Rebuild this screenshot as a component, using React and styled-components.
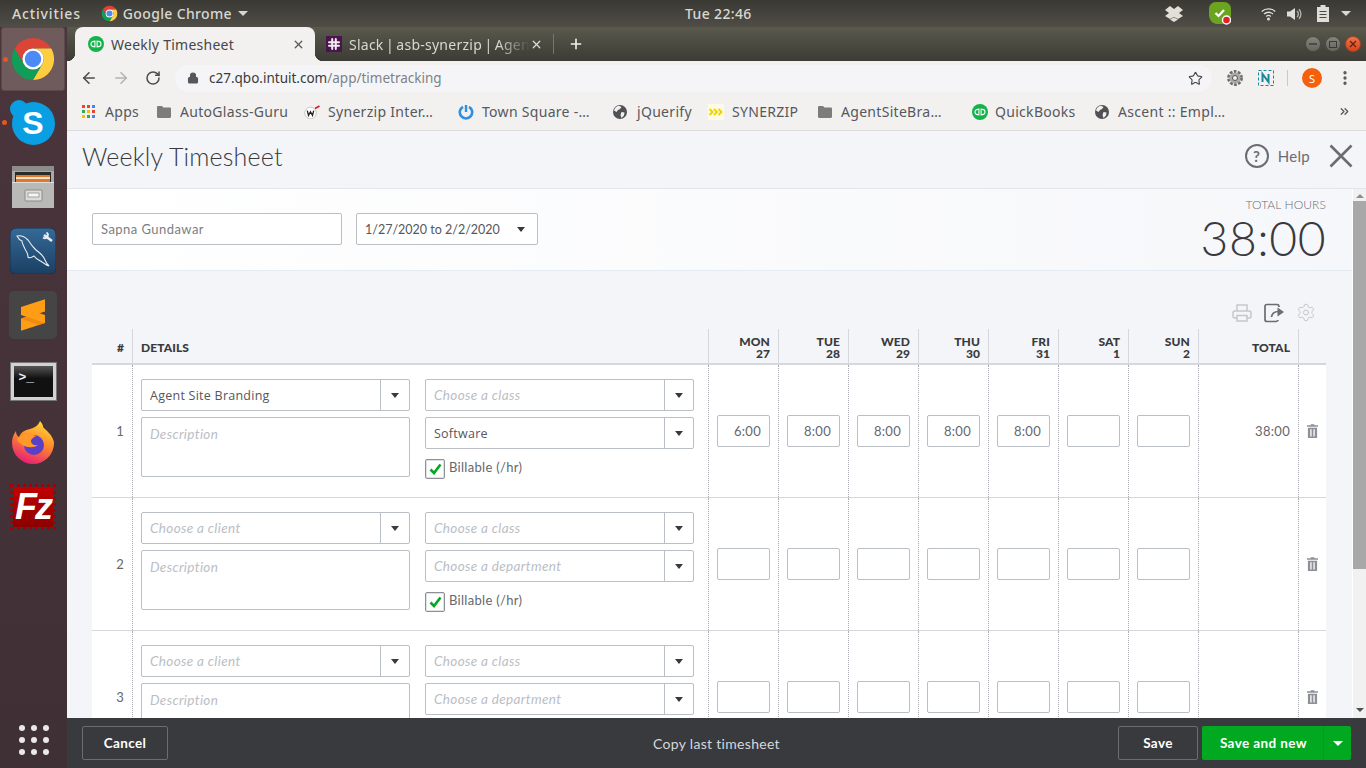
import React from "react";
import styled, { createGlobalStyle } from "styled-components";
import { Settings, Star, ArrowLeft, ArrowRight, RotateCw, Lock, Plus, X, MoreVertical, ChevronsRight } from "lucide-react";

const GlobalStyle = createGlobalStyle`
  html, body { margin: 0; padding: 0; overflow: hidden; }
  * { box-sizing: border-box; }
`;

const UI_FONT = `"Noto Sans", "Open Sans", sans-serif`;
const QBO_FONT = `"Lato", "Open Sans", sans-serif`;

const Screen = styled.div`
  width: 1366px;
  height: 768px;
  display: flex;
  flex-direction: column;
  overflow: hidden;
  font-family: ${UI_FONT};
`;

/* gnome top bar */
const TopBar = styled.div`
  height: 27px;
  flex: none;
  display: flex;
  align-items: center;
  background: linear-gradient(#3a3934, #4f4d46);
  color: #d9d8d0;
  font-size: 14px;
  font-weight: 500;
  letter-spacing: 0.35px;
`;

const TopLeft = styled.div`
  width: 685px;
  display: flex;
  align-items: center;
  padding-left: 12px;
`;

const AppName = styled.span`
  margin-left: 5px;
`;

const Activities = styled.span`
  margin-right: 20px;
  letter-spacing: 0.85px;
`;

const Caret = styled.span`
  display: inline-block;
  flex: none;
  margin-left: ${({ $ml }) => $ml || 0}px;
  border-left: ${({ $w }) => $w || 5}px solid transparent;
  border-right: ${({ $w }) => $w || 5}px solid transparent;
  border-top: ${({ $h }) => $h || 5}px solid ${({ $color }) => $color || "#d9d8d0"};
`;

const Clock = styled.span`
  width: 66px;
  white-space: nowrap;
`;

const Tray = styled.div`
  flex: 1;
  display: flex;
  justify-content: flex-end;
  align-items: center;
  padding-right: 15px;
`;

const TrayItem = styled.span`
  display: flex;
  margin-left: ${({ $ml }) => $ml || 0}px;
`;

const Main = styled.div`
  flex: 1;
  min-height: 0;
  display: flex;
`;

/* launcher */
const Dock = styled.div`
  width: 67px;
  flex: none;
  display: flex;
  flex-direction: column;
  background: linear-gradient(#4a353b, #3f3036);
  padding-bottom: 3px;
`;

const DockTile = styled.div`
  position: relative;
  height: 64px;
  flex: none;
  display: flex;
  align-items: center;
  justify-content: center;
  padding-top: ${({ $pt }) => $pt || 0}px;
  margin: 0 2px 0 1px;
  border-radius: 3px;
  background: ${({ $active }) => ($active ? "#6f5a5c" : "transparent")};
  border: ${({ $active }) => ($active ? "1px solid #5d494c" : "none")};
`;

const RunDot = styled.span`
  position: absolute;
  left: 1px;
  top: 29px;
  width: 5px;
  height: 5px;
  border-radius: 50%;
  background: #e95420;
`;

const DockGrid = styled.div`
  margin-top: auto;
  align-self: center;
  display: grid;
  grid-template-columns: repeat(3, 6px);
  gap: 6px;
  margin-bottom: 10px;
`;

const GridDot = styled.span`
  width: 6px;
  height: 6px;
  border-radius: 50%;
  background: #ebe8e8;
`;

const SkypeBadge = styled.div`
  position: relative;
  width: 43px;
  height: 43px;
  border-radius: 50%;
  background: #0a9fe3;
  color: #fff;
  font: 700 32px "Liberation Sans", sans-serif;
  display: flex;
  align-items: center;
  justify-content: center;

  &::before {
    content: "";
    position: absolute;
    left: -2px;
    top: -2px;
    width: 18px;
    height: 18px;
    border-radius: 50%;
    background: #0a9fe3;
  }
`;

const SkypeLetter = styled.span`
  position: relative;
`;

const FzBadge = styled.div`
  width: 46px;
  height: 46px;
  background: linear-gradient(#c20000, #8c0000);
  border: 3px dotted #a80000;
  background-clip: padding-box;
  color: #fff;
  font: italic 700 36px "Liberation Sans", sans-serif;
  letter-spacing: -2px;
  display: flex;
  align-items: center;
  justify-content: center;
`;

const TermBadge = styled.div`
  width: 45px;
  height: 37px;
  background: linear-gradient(#555, #111 40%);
  border: 3px solid #d2d2d2;
  outline: 1px solid #777;
  color: #eee;
  font: 700 13px "Liberation Mono", monospace;
  padding: 4px 0 0 5px;
`;

/* chrome window */
const Browser = styled.div`
  flex: 1;
  min-width: 0;
  display: flex;
  flex-direction: column;
`;

const TabStrip = styled.div`
  height: 34px;
  flex: none;
  display: flex;
  align-items: stretch;
  padding-left: 8px;
  background: linear-gradient(#5a594c, #3c3b35);
`;

const Tab = styled.div`
  position: relative;
  width: ${({ $active }) => ($active ? 240 : 238)}px;
  display: flex;
  align-items: center;
  padding: 0 10px 0 ${({ $active }) => ($active ? 13 : 11)}px;
  border-radius: 8px 8px 0 0;
  font-size: 14px;
  color: ${({ $active }) => ($active ? "#45474a" : "#d8d8d3")};
  background: ${({ $active }) => ($active ? "#f2f1f0" : "transparent")};

  ${({ $active }) =>
    $active &&
    `
    &::before, &::after {
      content: "";
      position: absolute;
      bottom: 0;
      width: 8px;
      height: 8px;
    }
    &::before { left: -8px; background: radial-gradient(circle at 0 0, transparent 8px, #f2f1f0 8.5px); }
    &::after { right: -8px; background: radial-gradient(circle at 100% 0, transparent 8px, #f2f1f0 8.5px); }
  `}
`;

const TabTitle = styled.span`
  flex: 1;
  min-width: 0;
  margin-left: 7px;
  white-space: nowrap;
  overflow: hidden;
  letter-spacing: 0.25px;
  ${({ $fade }) => $fade && `word-spacing: -1.5px; mask-image: linear-gradient(90deg, #000 82%, transparent 100%);`}
`;

const TabSep = styled.span`
  width: 1px;
  height: 20px;
  align-self: center;
  background: #77766c;
`;

const NewTab = styled.span`
  display: flex;
  align-self: center;
  margin-left: 14px;
  color: #f2f1f0;
`;

const WinButtons = styled.div`
  margin-left: auto;
  display: flex;
  align-items: center;
  gap: 4px;
  padding-right: 5px;
`;

const WinButton = styled.span`
  width: 16px;
  height: 16px;
  border-radius: 50%;
  display: flex;
  align-items: center;
  justify-content: center;
  background: ${({ $close }) => ($close ? "linear-gradient(#f0734a, #d9421a)" : "linear-gradient(#85847c, #66655e)")};
  border: 1px solid ${({ $close }) => ($close ? "#a8441f" : "#4a4944")};
`;

const Toolbar = styled.div`
  height: 34px;
  flex: none;
  display: flex;
  align-items: center;
  padding-left: 6px;
  background: #f2f1f0;
`;

const NavButton = styled.span`
  width: 32px;
  display: flex;
  justify-content: center;
  color: ${({ $off }) => ($off ? "#b3b3b3" : "#4a4c4f")};
`;

const Omnibox = styled.div`
  flex: 1;
  height: 27px;
  margin-left: 6px;
  display: flex;
  align-items: center;
  padding: 0 9px 0 12px;
  border-radius: 14px;
  background: #f5f5f7;
  font-size: 13.5px;
  color: #393b3e;
`;

const UrlHost = styled.span`
  margin-left: 10px;
`;

const UrlPath = styled.span`
  flex: 1;
  color: #7d8289;
`;

const Extensions = styled.div`
  width: 154px;
  flex: none;
  display: flex;
  align-items: center;
  padding-left: 14px;
`;

const ExtItem = styled.span`
  display: flex;
  margin-left: ${({ $ml }) => $ml || 0}px;
`;

const ExtSep = styled.span`
  width: 1px;
  height: 16px;
  margin: 0 13px;
  background: #c9c9c9;
`;

const Avatar = styled.span`
  width: 20px;
  height: 20px;
  margin-left: 1px;
  border-radius: 50%;
  display: flex;
  align-items: center;
  justify-content: center;
  background: #f4600c;
  color: #fff;
  font-size: 11px;
`;

const Bookmarks = styled.div`
  height: 36px;
  flex: none;
  display: flex;
  align-items: center;
  padding: 0 0 2px 15px;
  background: #f2f1f0;
  border-bottom: 1px solid #dcdcdf;
  font-size: 14px;
  color: #55585d;
  letter-spacing: 0.3px;
`;

const Bookmark = styled.div`
  width: ${({ $w }) => $w}px;
  flex: none;
  display: flex;
  align-items: center;
  white-space: nowrap;
`;

const BookmarkIcon = styled.span`
  width: ${({ $w }) => $w || 23}px;
  flex: none;
  display: flex;
`;

const MoreBookmarks = styled.span`
  margin-left: auto;
  display: flex;
  padding-right: 15px;
  color: #55585d;
`;

/* quickbooks page */
const Page = styled.div`
  flex: 1;
  min-height: 0;
  display: flex;
  flex-direction: column;
  font-family: ${QBO_FONT};
  color: #393a3d;
`;

const PageHeader = styled.div`
  height: 58px;
  flex: none;
  display: flex;
  align-items: center;
  padding: 0 13px 7px 15px;
  background: #f4f5f8;
  border-bottom: 1px solid #e3e5e8;
`;

const PageTitle = styled.h1`
  margin: 0;
  font-size: 25px;
  font-weight: 300;
  letter-spacing: 0.18px;
`;

const HelpGroup = styled.div`
  margin-left: auto;
  display: flex;
  align-items: center;
  color: #6b6c72;
  font-size: 15px;
  letter-spacing: 0.3px;
`;

const HelpCircle = styled.span`
  width: 24px;
  height: 24px;
  margin-right: 9px;
  border: 2px solid #6b6c72;
  border-radius: 50%;
  display: flex;
  align-items: center;
  justify-content: center;
  font-size: 15px;
  font-weight: 700;
`;

const CloseIcon = styled.span`
  display: flex;
  margin-left: 19px;
`;

const PageBody = styled.div`
  flex: 1;
  min-height: 0;
  display: flex;
`;

const Scroller = styled.div`
  flex: 1;
  min-width: 0;
  overflow: hidden;
  background: #f4f5f8;
`;

const Scrollbar = styled.div`
  width: 13px;
  flex: none;
  margin-left: 1px;
  display: flex;
  flex-direction: column;
  align-items: center;
  background: #f1f1f1;
`;

const ScrollThumb = styled.div`
  width: 13px;
  height: 368px;
  margin-top: 3px;
  background: #a8a8a8;
`;

const ScrollArrowUp = styled.span`
  margin-top: 5px;
  border-left: 4px solid transparent;
  border-right: 4px solid transparent;
  border-bottom: 4px solid #8e8e8e;
`;

const ScrollArrowDown = styled.span`
  margin-top: auto;
  margin-bottom: 6px;
  border-left: 4px solid transparent;
  border-right: 4px solid transparent;
  border-top: 4px solid #505050;
`;

const Summary = styled.div`
  height: 82px;
  display: flex;
  align-items: flex-start;
  padding: 24px 26px 0 25px;
  background: linear-gradient(90deg, #fff, #f6f7fa);
  border-bottom: 1px solid #e4ebf3;
`;

const NameInput = styled.div`
  width: 250px;
  height: 32px;
  display: flex;
  align-items: center;
  padding-left: 8px;
  background: #fff;
  border: 1px solid #babec5;
  border-radius: 2px;
  font-size: 13px;
  letter-spacing: 0.45px;
  color: #7c7e83;
`;

const DateSelect = styled.div`
  width: 182px;
  height: 32px;
  margin-left: 14px;
  display: flex;
  align-items: center;
  justify-content: space-between;
  padding: 0 12px 0 8px;
  background: #fff;
  border: 1px solid #babec5;
  border-radius: 2px;
  font-size: 12.5px;
  color: #55575c;
`;

const TotalBlock = styled.div`
  margin: -16px 0 0 auto;
  text-align: right;
`;

const TotalLabel = styled.div`
  font-size: 12px;
  line-height: 16px;
  font-weight: 300;
  letter-spacing: 0.1px;
  color: #6b6c72;
`;

const TotalValue = styled.div`
  font-size: 48px;
  font-weight: 300;
  line-height: 50px;
  letter-spacing: 0.5px;
`;

const TableTools = styled.div`
  height: 58px;
  display: flex;
  justify-content: flex-end;
  align-items: flex-end;
  gap: 12px;
  padding: 0 10px 6px 0;
`;

const ToolIcon = styled.span`
  display: flex;
  width: 20px;
  justify-content: center;
`;

const TableWrap = styled.div`
  width: 1234px;
  margin-left: 25px;
`;

const TableTop = styled.div`
  width: 1259px;
`;

const Row = styled.div`
  display: grid;
  grid-template-columns: 40px 576px repeat(7, 70px) 100px 28px;
  background: ${({ $head }) => ($head ? "#f4f5f8" : "#fff")};
  border-bottom: ${({ $head }) => ($head ? "2px solid #d4d7dc" : "1px solid #d4d7dc")};
  height: ${({ $head }) => ($head ? "36px" : "133px")};
`;

const HeadCell = styled.div`
  display: flex;
  align-items: center;
  justify-content: ${({ $left }) => ($left ? "flex-start" : "flex-end")};
  padding: 4px 8px 0;
  border-left: ${({ $first }) => ($first ? "none" : "1px solid #d4d7dc")};
  font-size: 12px;
  font-weight: 900;
  line-height: 12px;
  letter-spacing: 0.1px;
  text-align: right;
`;

const Cell = styled.div`
  display: flex;
  align-items: center;
  justify-content: ${({ $center }) => ($center ? "center" : "flex-end")};
  padding: 0 8px;
  border-left: ${({ $first }) => ($first ? "none" : "1px dotted #a9abb0")};
  font-size: 13px;
  letter-spacing: 0.3px;
  color: #65676c;
`;

const DetailsCell = styled.div`
  display: grid;
  grid-template-columns: 269px 269px;
  column-gap: 15px;
  align-content: start;
  padding: 14px 0 0 8px;
  border-left: 1px dotted #a9abb0;
`;

const Stack = styled.div`
  display: flex;
  flex-direction: column;
  gap: 6px;
`;

const Combo = styled.div`
  height: 32px;
  display: flex;
  align-items: stretch;
  background: #fff;
  border: 1px solid #babec5;
  border-radius: 2px;
`;

const ComboText = styled.span`
  flex: 1;
  display: flex;
  align-items: center;
  padding-left: 8px;
  font-family: ${({ $placeholder }) => ($placeholder ? QBO_FONT : `"Open Sans", sans-serif`)};
  font-size: ${({ $placeholder }) => ($placeholder ? "13.5px" : "12.5px")};
  letter-spacing: ${({ $placeholder }) => ($placeholder ? "0.35px" : "0.25px")};
  font-style: ${({ $placeholder }) => ($placeholder ? "italic" : "normal")};
  color: ${({ $placeholder }) => ($placeholder ? "#babec5" : "#55575c")};
`;

const ComboArrow = styled.span`
  width: 29px;
  flex: none;
  display: flex;
  align-items: center;
  justify-content: center;
  border-left: 1px solid #babec5;
`;

const Description = styled.div`
  height: 60px;
  padding: 8px;
  border: 1px solid #babec5;
  border-radius: 2px;
  font-size: 13.5px;
  font-style: italic;
  letter-spacing: 0.35px;
  color: #babec5;
`;

const BillableRow = styled.label`
  display: flex;
  align-items: center;
  margin-top: 4px;
  font-size: 13px;
  letter-spacing: 0.3px;
  color: #65676c;
`;

const BillableText = styled.span`
  padding-bottom: 4px;
`;

const CheckBox = styled.span`
  width: 20px;
  height: 20px;
  margin-right: 4px;
  display: flex;
  align-items: center;
  justify-content: center;
  border: 1px solid #8d9096;
  border-radius: 2px;
  box-shadow: inset 0 0 0 1px #dfe1e4;
`;

const HourInput = styled.div`
  width: 53px;
  height: 32px;
  flex: none;
  display: flex;
  align-items: center;
  justify-content: flex-end;
  padding-right: 8px;
  border: 1px solid #babec5;
  border-radius: 2px;
  font-size: 13px;
  letter-spacing: 0.3px;
  color: #65676c;
`;

const Footer = styled.div`
  height: 50px;
  flex: none;
  display: grid;
  grid-template-columns: 1fr auto 1fr;
  align-items: center;
  padding: 0 15px;
  background: #393a3d;
  color: #fff;
`;

const FooterRight = styled.div`
  display: flex;
  justify-content: flex-end;
  gap: 4px;
`;

const GhostButton = styled.button`
  width: ${({ $w }) => $w}px;
  height: 34px;
  padding: 0;
  background: transparent;
  border: 1px solid #6b6c72;
  border-radius: 2px;
  color: #fff;
  font: 700 13.5px ${QBO_FONT};
  letter-spacing: 0.4px;
`;

const CopyLink = styled.span`
  font-size: 14px;
  letter-spacing: 0.3px;
  color: #d4d7dc;
`;

const SplitButton = styled.div`
  width: 149px;
  height: 34px;
  display: flex;
  background: #00a91f;
  border-radius: 2px;
  font-size: 13.5px;
  font-weight: 700;
  letter-spacing: 0.4px;
`;

const SplitLabel = styled.span`
  flex: 1;
  display: flex;
  align-items: center;
  justify-content: center;
  padding-left: 2px;
`;

const SplitArrow = styled.span`
  width: 28px;
  display: flex;
  align-items: center;
  justify-content: center;
  border-left: 1px solid #079a22;
`;

/* drawings */
const ChromeLogo = ({ size }) => (
  <svg width={size} height={size} viewBox="0 0 48 48">
    <path fill="#db4437" d="M24 2A22 22 0 0 1 43.05 13H24a11 11 0 0 0-9.53 16.5L4.95 13A22 22 0 0 1 24 2Z" />
    <path fill="#ffcd40" d="M43.05 13A22 22 0 0 1 24 46L33.53 29.5A11 11 0 0 0 24 13Z" />
    <path fill="#0f9d58" d="M24 46A22 22 0 0 1 4.95 13L14.47 29.5A11 11 0 0 0 33.53 29.5Z" />
    <circle cx="24" cy="24" r="11" fill="#fff" />
    <circle cx="24" cy="24" r="8.6" fill="#4c8bf5" />
  </svg>
);

const QbLogo = ({ size = 16 }) => (
  <svg width={size} height={size} viewBox="0 0 16 16">
    <circle cx="8" cy="8" r="8" fill="#14b34a" />
    <path
      d="M6.9 4.4V11.6M9.1 4.4V11.6M6.9 5.4H5.6a2.6 2.6 0 0 0 0 5.2h.6M9.1 10.6h1.3a2.6 2.6 0 0 0 0-5.2h-.6"
      fill="none"
      stroke="#fff"
      strokeWidth="1.1"
    />
  </svg>
);

const SlackLogo = () => (
  <svg width="16" height="16" viewBox="0 0 16 16">
    <rect width="16" height="16" fill="#4a154b" />
    <path d="M6.2 3v10M9.8 3v10M3 6.2h10M3 9.8h10" stroke="#f3e9f3" strokeWidth="2" strokeLinecap="round" />
    <path d="M8 8h0" stroke="#4a154b" strokeWidth="1.4" />
  </svg>
);

const FolderIcon = () => (
  <svg width="14" height="12" viewBox="0 0 14 12">
    <path fill="#7c7c7c" d="M0 1.2C0 .5.5 0 1.2 0H5l1.4 1.6h6.4c.7 0 1.2.5 1.2 1.2v8c0 .7-.5 1.2-1.2 1.2H1.2C.5 12 0 11.5 0 10.8Z" />
  </svg>
);

const AppsIcon = () => {
  const colors = ["#ea4335", "#ea4335", "#4285f4", "#34a853", "#fbbc05", "#ea4335", "#fbbc05", "#34a853", "#4285f4"];
  return (
    <svg width="13" height="13" viewBox="0 0 13 13">
      {colors.map((c, i) => (
        <rect key={i} x={(i % 3) * 5} y={Math.floor(i / 3) * 5} width="3" height="3" fill={c} />
      ))}
    </svg>
  );
};

const WatchIcon = () => (
  <svg width="16" height="14" viewBox="0 0 16 14">
    <circle cx="6.5" cy="8" r="5.8" fill="#fff" stroke="#bbb" strokeWidth="0.8" />
    <path d="M3.3 5.6l1.2 4.8 2-3.6 2 3.6 1.2-4.8" fill="none" stroke="#222" strokeWidth="1.3" />
    <path d="M11 3.5L15.5 1" stroke="#e02020" strokeWidth="1.8" />
  </svg>
);

const PowerRing = () => (
  <svg width="16" height="16" viewBox="0 0 16 16">
    <path d="M5 2.8a6.2 6.2 0 1 0 6 0" fill="none" stroke="#2f8fe0" strokeWidth="2.6" />
    <path d="M8 1v7" stroke="#2f8fe0" strokeWidth="2.4" />
  </svg>
);

const SynerzipIcon = () => (
  <svg width="16" height="16" viewBox="0 0 16 16">
    <rect width="16" height="16" fill="#fdfbe6" />
    <path d="M1.5 5l3 3-3 3M6 5l3 3-3 3M10.5 5l3 3-3 3" fill="none" stroke="#f0d400" strokeWidth="2" />
  </svg>
);

const GlobeIcon = () => (
  <svg width="14" height="14" viewBox="0 0 14 14">
    <circle cx="7" cy="7" r="7" fill="#4f5155" />
    <path fill="#f2f1f0" d="M6 .8L8.5 2 7 4 5 5 3.5 7 1 5.5C1.5 3 3.5 1.2 6 .8ZM8.5 7l3 .5L11 10.5 8.5 13 7.5 10Z" />
  </svg>
);

const FilesIcon = () => (
  <svg width="44" height="44" viewBox="0 0 44 44">
    <rect x="1" y="1" width="42" height="42" rx="2" fill="#a9a9a8" />
    <rect x="1" y="1" width="42" height="5" fill="#8c8c8b" />
    <rect x="4" y="7" width="36" height="10" fill="#2a2a2a" />
    <rect x="5" y="10" width="34" height="8" fill="#e0772a" />
    <rect x="5" y="12" width="34" height="2" fill="#f4e3cc" />
    <rect x="1" y="17" width="42" height="26" fill="#b9b9b8" />
    <rect x="1" y="17" width="42" height="1" fill="#dedede" />
    <rect x="14" y="25" width="17" height="11" rx="1" fill="#dcdcdc" stroke="#8a8a8a" />
    <rect x="17" y="28" width="11" height="4" fill="#f5f5f5" stroke="#777" strokeWidth="0.6" />
  </svg>
);

const WorkbenchIcon = () => (
  <svg width="46" height="46" viewBox="0 0 46 46">
    <defs>
      <linearGradient id="wb" x1="0" y1="0" x2="0" y2="1">
        <stop offset="0" stopColor="#356a97" />
        <stop offset="1" stopColor="#1a3f63" />
      </linearGradient>
    </defs>
    <rect width="46" height="46" rx="6" fill="url(#wb)" stroke="#16324e" />
    <path
      d="M7 8c4-1 8 1 11 4 2 3 4 6 7 9 3 3 7 5 9 9 1 2 2 5 5 8-3-1-5-3-7-4-3-2-6-3-8-6-3 2-5 2-6 1 0-3-1-5-3-8-1-3-3-5-3-8-3-1-4-3-5-5Z"
      fill="none"
      stroke="#e8eef3"
      strokeWidth="1.1"
    />
    <path d="M34 7l8 6" stroke="#e8eef3" strokeWidth="2.6" />
    <path d="M36.5 4.5a3 3 0 0 1-3.5 5" fill="none" stroke="#e8eef3" strokeWidth="1.8" />
  </svg>
);

const SublimeIcon = () => (
  <svg width="48" height="48" viewBox="0 0 48 48">
    <rect width="48" height="48" rx="5" fill="#454545" />
    <path fill="#ff9d14" d="M12 16L36 8.3V20.5L30.7 22.2L36 24V32L12 39.7V27.5L17.3 25.8L12 24Z" />
    <path fill="#e8830e" d="M12 27.5L17.3 25.8L36 32L30 34Z" opacity="0.7" />
  </svg>
);

const FirefoxIcon = () => (
  <svg width="46" height="46" viewBox="0 0 46 46">
    <defs>
      <linearGradient id="ff" x1="0.7" y1="0" x2="0.3" y2="1">
        <stop offset="0" stopColor="#ffd83a" />
        <stop offset="0.45" stopColor="#ff8a2a" />
        <stop offset="1" stopColor="#e6197a" />
      </linearGradient>
    </defs>
    <path d="M30 1c4 4 2 6 5 8 6 5 9 11 9 14a21 21 0 1 1-42 0c0-4 1-8 4-12 0 3 1 5 3 6 2-5 6-7 11-8 4-1 8-3 10-8Z" fill="url(#ff)" />
    <circle cx="24" cy="25" r="10" fill="#5b3fc4" />
    <path d="M7 19c5-5 12-6 19-3-2 1-5 3-5 5 0 3 3 5 7 4-5 4-14 2-17-1-2-1-3-3-4-5Z" fill="#ff9a2a" />
  </svg>
);

const DropboxIcon = () => (
  <svg width="18" height="16" viewBox="0 0 18 16">
    <path fill="#e2dfd8" d="M5 0l4 3 4-3 5 4-4 3 4 3-5 3-4-2-4 2-5-3 4-3-4-3Z" />
    <path fill="#e2dfd8" d="M5 13.5l4 2.5 4-2.5-4-2Z" />
  </svg>
);

const ShieldIcon = () => (
  <svg width="22" height="24" viewBox="0 0 22 24">
    <path fill="#6ba51f" d="M7 0h8c4 0 7 3 7 7v6c0 5-4 9-9 9H8C4 22 0 18 0 13V7c0-4 3-7 7-7Z" />
    <path d="M6.5 11l3 3 5.5-6" fill="none" stroke="#fff" strokeWidth="2.2" />
    <circle cx="17.5" cy="18" r="4" fill="#e3202a" stroke="#fff" strokeWidth="1.4" />
  </svg>
);

const WifiIcon = () => (
  <svg width="15" height="14" viewBox="0 0 15 14">
    <g fill="none" stroke="#dfded8" strokeWidth="1.3">
      <path d="M.7 4.5a10 10 0 0 1 13.6 0" />
      <path d="M3 7a6.7 6.7 0 0 1 9 0" />
      <path d="M5.2 9.4a3.4 3.4 0 0 1 4.6 0" />
    </g>
    <circle cx="7.5" cy="12" r="1.5" fill="#dfded8" />
  </svg>
);

const VolumeIcon = () => (
  <svg width="16" height="14" viewBox="0 0 16 14">
    <path fill="#dfded8" d="M0 4.5h3L8 1v12L3 9.5H0Z" />
    <path d="M10 4a4 4 0 0 1 0 6M12 2.2a7 7 0 0 1 0 9.6" fill="none" stroke="#b9b8b0" strokeWidth="1.3" />
  </svg>
);

const BatteryIcon = () => (
  <svg width="12" height="17" viewBox="0 0 12 17">
    <path fill="#dfded8" d="M3.5 0h5v2H12v15H0V2h3.5Z" />
    <path d="M2.5 6.5h7M2.5 9.5h7M2.5 12.5h7" stroke="#4b4a43" strokeWidth="1.2" />
  </svg>
);

const GearExtIcon = () => (
  <svg width="18" height="18" viewBox="0 0 18 18">
    <circle cx="9" cy="9" r="6.2" fill="none" stroke="#6d6d6d" strokeWidth="3.4" strokeDasharray="2.6 1.3" />
    <circle cx="9" cy="9" r="5.5" fill="#a9a9a9" />
    <circle cx="9" cy="9" r="2.5" fill="#eeeeee" stroke="#555" />
  </svg>
);

const NimbusIcon = () => (
  <svg width="16" height="16" viewBox="0 0 16 16">
    <rect x="0.5" y="0.5" width="15" height="15" fill="none" stroke="#18869b" strokeDasharray="3 2" />
    <path d="M4.5 12V4l6 8V4" fill="none" stroke="#18869b" strokeWidth="2" />
  </svg>
);

const PrintIcon = () => (
  <svg width="20" height="20" viewBox="0 0 20 20" fill="none" stroke="#c4c6cb" strokeWidth="1.5">
    <path d="M5 8V2h10v6" />
    <path d="M5 15H3c-1 0-2-1-2-2v-3c0-1 1-2 2-2h14c1 0 2 1 2 2v3c0 1-1 2-2 2h-2" />
    <path d="M5 12.5h10v5.5H5Z" />
  </svg>
);

const ExportIcon = () => (
  <svg width="20" height="20" viewBox="0 0 20 20" fill="none" stroke="#6b6c72" strokeWidth="1.7">
    <path d="M13 1.5H3c-1 0-2 1-2 2v13c0 1 1 2 2 2h9c1 0 2-1 2-1.5" />
    <path d="M13 1.5c1 0 2 1 2 2.5" />
    <path d="M7.5 14c.5-3.5 3-5.5 7-5.5" />
    <path fill="#6b6c72" stroke="none" d="M13.5 4.5L20 9l-6.5 4.5Z" />
  </svg>
);

const TrashIcon = () => (
  <svg width="13" height="16" viewBox="0 0 12 15">
    <path fill="#8d9096" d="M4 0h4v1.2h4v1.6H0V1.2h4ZM1 4h10v11H1Z" />
    <path d="M4.3 5.5V13.5M7.7 5.5V13.5" stroke="#fff" strokeWidth="1.4" />
  </svg>
);

const GreenCheck = () => (
  <svg width="13" height="12" viewBox="0 0 13 12">
    <path d="M1.5 6.5l3.5 3.5 6.5-8.5" fill="none" stroke="#00a91f" strokeWidth="2.6" />
  </svg>
);

const CloseX = () => (
  <svg width="24" height="24" viewBox="0 0 24 24">
    <path d="M1.5 1.5l21 21M22.5 1.5l-21 21" stroke="#6b6c72" strokeWidth="2.6" />
  </svg>
);

const DAYS = [
  ["MON", 27],
  ["TUE", 28],
  ["WED", 29],
  ["THU", 30],
  ["FRI", 31],
  ["SAT", 1],
  ["SUN", 2],
];

const ROWS = [
  {
    client: "Agent Site Branding",
    department: "Software",
    hours: ["6:00", "8:00", "8:00", "8:00", "8:00", "", ""],
    total: "38:00",
  },
  { client: "", department: "", hours: ["", "", "", "", "", "", ""], total: "" },
  { client: "", department: "", hours: ["", "", "", "", "", "", ""], total: "" },
];

const BOOKMARKS = [
  { label: "Apps", w: 75, icon: <AppsIcon />, iw: 23 },
  { label: "AutoGlass-Guru", w: 147, icon: <FolderIcon /> },
  { label: "Synerzip Inter…", w: 154, icon: <WatchIcon />, iw: 24 },
  { label: "Town Square -…", w: 155, icon: <PowerRing />, iw: 24 },
  { label: "jQuerify", w: 95, icon: <GlobeIcon />, iw: 24 },
  { label: "SYNERZIP", w: 110, icon: <SynerzipIcon />, iw: 24 },
  { label: "AgentSiteBra…", w: 154, icon: <FolderIcon /> },
  { label: "QuickBooks", w: 123, icon: <QbLogo />, iw: 23 },
  { label: "Ascent :: Empl…", w: 200, icon: <GlobeIcon /> },
];

const Select = ({ value, placeholder }) => (
  <Combo>
    <ComboText $placeholder={!value}>{value || placeholder}</ComboText>
    <ComboArrow>
      <Caret $w={4.5} $h={5} $color="#393a3d" />
    </ComboArrow>
  </Combo>
);

const TimeRow = ({ index, row }) => (
  <Row>
    <Cell $first>{index}</Cell>
    <DetailsCell>
      <Stack>
        <Select value={row.client} placeholder="Choose a client" />
        <Description>Description</Description>
      </Stack>
      <Stack>
        <Select placeholder="Choose a class" />
        <Select value={row.department} placeholder="Choose a department" />
        <BillableRow>
          <CheckBox>
            <GreenCheck />
          </CheckBox>
          <BillableText>Billable (/hr)</BillableText>
        </BillableRow>
      </Stack>
    </DetailsCell>
    {row.hours.map((h, i) => (
      <Cell key={i}>
        <HourInput>{h}</HourInput>
      </Cell>
    ))}
    <Cell>{row.total}</Cell>
    <Cell $center>
      <TrashIcon />
    </Cell>
  </Row>
);

const App = () => (
  <Screen>
    <GlobalStyle />
    <TopBar>
      <TopLeft>
        <Activities>Activities</Activities>
        <ChromeLogo size={17} />
        <AppName>Google Chrome</AppName>
        <Caret $ml={6} />
      </TopLeft>
      <Clock>Tue 22:46</Clock>
      <Tray>
        <TrayItem>
          <DropboxIcon />
        </TrayItem>
        <TrayItem $ml={26}>
          <ShieldIcon />
        </TrayItem>
        <TrayItem $ml={30}>
          <WifiIcon />
        </TrayItem>
        <TrayItem $ml={11}>
          <VolumeIcon />
        </TrayItem>
        <TrayItem $ml={14}>
          <BatteryIcon />
        </TrayItem>
        <TrayItem $ml={12}>
          <Caret />
        </TrayItem>
      </Tray>
    </TopBar>

    <Main>
      <Dock>
        <DockTile $active>
          <RunDot />
          <ChromeLogo size={46} />
        </DockTile>
        <DockTile>
          <RunDot />
          <SkypeBadge>
            <SkypeLetter>S</SkypeLetter>
          </SkypeBadge>
        </DockTile>
        <DockTile>
          <FilesIcon />
        </DockTile>
        <DockTile>
          <WorkbenchIcon />
        </DockTile>
        <DockTile>
          <SublimeIcon />
        </DockTile>
        <DockTile $pt={4}>
          <TermBadge>&gt;_</TermBadge>
        </DockTile>
        <DockTile>
          <FirefoxIcon />
        </DockTile>
        <DockTile>
          <FzBadge>Fz</FzBadge>
        </DockTile>
        <DockGrid>
          {Array.from({ length: 9 }).map((_, i) => (
            <GridDot key={i} />
          ))}
        </DockGrid>
      </Dock>

      <Browser>
        <TabStrip>
          <Tab $active>
            <QbLogo />
            <TabTitle>Weekly Timesheet</TabTitle>
            <X size={13} strokeWidth={2.4} color="#55585d" />
          </Tab>
          <Tab>
            <SlackLogo />
            <TabTitle $fade>Slack | asb-synerzip | Agent</TabTitle>
            <X size={13} strokeWidth={2.2} color="#dcdcd7" />
          </Tab>
          <TabSep />
          <NewTab>
            <Plus size={16} strokeWidth={2.4} />
          </NewTab>
          <WinButtons>
            <WinButton>
              <svg width="8" height="2" viewBox="0 0 8 2">
                <path d="M0 1h8" stroke="#3b3a36" strokeWidth="1.4" />
              </svg>
            </WinButton>
            <WinButton>
              <svg width="8" height="7" viewBox="0 0 8 7">
                <rect x="0.5" y="0.5" width="7" height="6" fill="none" stroke="#3b3a36" />
              </svg>
            </WinButton>
            <WinButton $close>
              <svg width="8" height="8" viewBox="0 0 8 8">
                <path d="M1 1l6 6M7 1l-6 6" stroke="#5a2410" strokeWidth="1.3" />
              </svg>
            </WinButton>
          </WinButtons>
        </TabStrip>

        <Toolbar>
          <NavButton>
            <ArrowLeft size={18} strokeWidth={2.1} />
          </NavButton>
          <NavButton $off>
            <ArrowRight size={18} strokeWidth={2.1} />
          </NavButton>
          <NavButton>
            <RotateCw size={16} strokeWidth={2.3} />
          </NavButton>
          <Omnibox>
            <Lock size={12} fill="#55585d" color="#55585d" strokeWidth={2.2} />
            <UrlHost>c27.qbo.intuit.com</UrlHost>
            <UrlPath>/app/timetracking</UrlPath>
            <Star size={15} color="#45474a" strokeWidth={1.8} />
          </Omnibox>
          <Extensions>
            <GearExtIcon />
            <ExtItem $ml={14}>
              <NimbusIcon />
            </ExtItem>
            <ExtSep />
            <Avatar>S</Avatar>
            <ExtItem $ml={14}>
              <MoreVertical size={18} color="#55585d" strokeWidth={2.4} />
            </ExtItem>
          </Extensions>
        </Toolbar>

        <Bookmarks>
          {BOOKMARKS.map((b) => (
            <Bookmark key={b.label} $w={b.w}>
              <BookmarkIcon $w={b.iw}>{b.icon}</BookmarkIcon>
              {b.label}
            </Bookmark>
          ))}
          <MoreBookmarks>
            <ChevronsRight size={13} strokeWidth={2.4} />
          </MoreBookmarks>
        </Bookmarks>

        <Page>
          <PageHeader>
            <PageTitle>Weekly Timesheet</PageTitle>
            <HelpGroup>
              <HelpCircle>?</HelpCircle>
              Help
              <CloseIcon>
                <CloseX />
              </CloseIcon>
            </HelpGroup>
          </PageHeader>

          <PageBody>
            <Scroller>
              <Summary>
                <NameInput>Sapna Gundawar</NameInput>
                <DateSelect>
                  1/27/2020 to 2/2/2020
                  <Caret $w={4.5} $h={5} $color="#393a3d" />
                </DateSelect>
                <TotalBlock>
                  <TotalLabel>TOTAL HOURS</TotalLabel>
                  <TotalValue>38:00</TotalValue>
                </TotalBlock>
              </Summary>

              <TableTop>
                <TableTools>
                  <ToolIcon>
                    <PrintIcon />
                  </ToolIcon>
                  <ToolIcon>
                    <ExportIcon />
                  </ToolIcon>
                  <ToolIcon>
                    <Settings size={21} color="#c4c6cb" strokeWidth={1.2} />
                  </ToolIcon>
                </TableTools>
              </TableTop>

              <TableWrap>
                <Row $head>
                  <HeadCell $first>#</HeadCell>
                  <HeadCell $left>DETAILS</HeadCell>
                  {DAYS.map(([day, date]) => (
                    <HeadCell key={day}>
                      <span>
                        {day}
                        <br />
                        {date}
                      </span>
                    </HeadCell>
                  ))}
                  <HeadCell>TOTAL</HeadCell>
                  <HeadCell />
                </Row>
                {ROWS.map((row, i) => (
                  <TimeRow key={i} index={i + 1} row={row} />
                ))}
              </TableWrap>
            </Scroller>
            <Scrollbar>
              <ScrollArrowUp />
              <ScrollThumb />
              <ScrollArrowDown />
            </Scrollbar>
          </PageBody>

          <Footer>
            <div>
              <GhostButton $w={86}>Cancel</GhostButton>
            </div>
            <CopyLink>Copy last timesheet</CopyLink>
            <FooterRight>
              <GhostButton $w={80}>Save</GhostButton>
              <SplitButton>
                <SplitLabel>Save and new</SplitLabel>
                <SplitArrow>
                  <Caret $w={5} $h={5} $color="#fff" />
                </SplitArrow>
              </SplitButton>
            </FooterRight>
          </Footer>
        </Page>
      </Browser>
    </Main>
  </Screen>
);

export default App;
